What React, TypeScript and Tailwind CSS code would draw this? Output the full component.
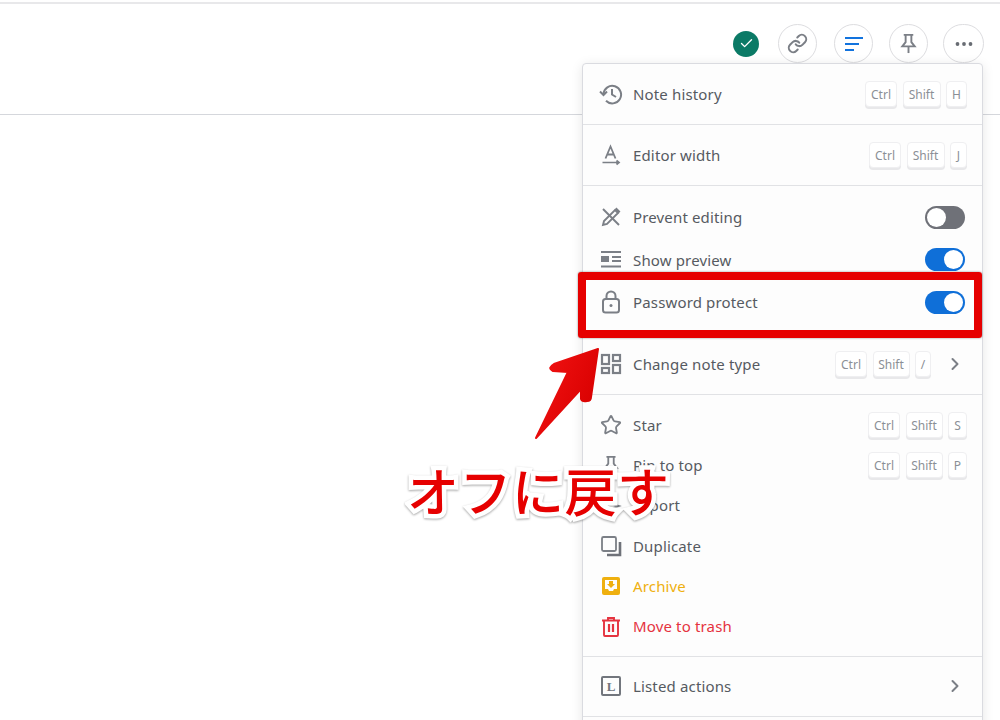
import React from "react";
import { Check, ChevronRight, Link as LinkIcon, Star } from "lucide-react";

const Keys = ({ keys, w }: { keys: string[]; w: string[] }) => (
  <div className="flex items-center gap-[5.5px]">
    {keys.map((k, i) => (
      <span
        key={k}
        style={{ width: w[i] }}
        className="flex h-[26px] items-center justify-center rounded-[4px] border border-[#efeff1] bg-white pt-[1px] text-[12px] text-[#8b8f96] shadow-[0_2px_0_#e8e8ea]"
      >
        {k}
      </span>
    ))}
  </div>
);

const Toggle = ({ on }: { on: boolean }) =>
  on ? (
    <div className="flex h-[23px] w-[40px] items-center justify-end rounded-full bg-[#0f6fd8] pr-[2px]">
      <div className="h-[19px] w-[19px] rounded-full bg-white" />
    </div>
  ) : (
    <div className="flex h-[23px] w-[40px] items-center rounded-full bg-[#6f7178] pl-[2px]">
      <div className="h-[19px] w-[19px] rounded-full bg-white" />
    </div>
  );

const Row = ({
  icon,
  label,
  right,
  h,
  color = "text-[#565a61]",
}: {
  icon: React.ReactNode;
  label: string;
  right?: React.ReactNode;
  h: string;
  color?: string;
}) => (
  <div className={`flex items-center pl-[16px] pr-[15px] ${h}`}>
    <div className="flex w-[24px] items-center justify-center">{icon}</div>
    <span className={`ml-[10px] flex-1 text-[15px] tracking-[0.15px] ${color}`}>{label}</span>
    {right}
  </div>
);

const G = "#7b7f86";

const HistoryIcon = () => (
  <svg width="24" height="24" viewBox="0 0 24 24" fill="none" stroke={G} strokeWidth="2">
    <path d="M4.5 12 A8.8 8.8 0 1 1 7 18.8" />
    <path d="M1 9.5 L4.5 13 L8 9.5" />
    <path d="M13 7 V12.5 L17 15" />
  </svg>
);
const EditorIcon = () => (
  <svg width="22" height="22" viewBox="0 0 22 22" fill="none" stroke={G} strokeWidth="1.8">
    <path d="M5.5 14.5 L10.5 2.5 L15.5 14.5 M7.5 10.5 H13.5" />
    <path d="M2.5 18.5 H18.5 M16.5 16.5 L19 18.5 L16.5 20.5" strokeWidth="1.7" />
  </svg>
);
const PencilOffIcon = () => (
  <svg width="22" height="22" viewBox="0 0 22 22" fill="none" stroke={G} strokeWidth="1.9">
    <path d="M3 3 L19 19" />
    <path d="M3 19 L4 15 L15 4 L18 7 L7 18 Z" />
    <path d="M15.5 2.5 L19.5 6.5" strokeWidth="2.6" />
  </svg>
);
const PreviewIcon = () => (
  <svg width="22" height="22" viewBox="0 0 22 22" fill="none" stroke={G} strokeWidth="1.8">
    <path d="M1 3 H21 M12 8 H21 M12 12 H21 M1 17.5 H21" />
    <rect x="1" y="7" width="8" height="6" fill={G} stroke="none" />
  </svg>
);
const LockIcon = () => (
  <svg width="22" height="24" viewBox="0 0 22 24" fill="none" stroke={G} strokeWidth="2">
    <rect x="3" y="9" width="16" height="13.5" rx="2.5" />
    <path d="M6.5 9 V6 A4.5 4.5 0 0 1 15.5 6 V9" />
    <circle cx="11" cy="15.5" r="1.5" fill={G} stroke="none" />
  </svg>
);
const TypeIcon = () => (
  <svg width="22" height="22" viewBox="0 0 22 22" fill="none" stroke={G} strokeWidth="2.2">
    <rect x="2" y="2" width="7" height="9" />
    <rect x="13" y="2" width="7" height="6" />
    <rect x="13" y="12" width="7" height="8" />
    <rect x="2" y="15" width="7" height="5" />
  </svg>
);
const PushPin = ({ size, c = G }: { size: number; c?: string }) => (
  <svg width={size} height={size} viewBox="0 0 22 22" fill="none" stroke={c} strokeWidth="2">
    <path d="M6 2 H16 M8 2 V9.5 L4.5 14 H17.5 L14 9.5 V2" />
    <path d="M11 14 V21" />
  </svg>
);
const ExportIcon = () => (
  <svg width="22" height="22" viewBox="0 0 22 22" fill="none" stroke={G} strokeWidth="1.8">
    <path d="M11 3 L13 9 L19 11 L13 13 L11 19 L9 13 L3 11 L9 9 Z" />
  </svg>
);
const DuplicateIcon = () => (
  <svg width="22" height="22" viewBox="0 0 22 22" fill="none">
    <path d="M7 20 H20 V7" stroke="#6f7279" strokeWidth="2.6" />
    <rect x="2" y="2" width="14" height="14" rx="1.5" stroke={G} strokeWidth="1.8" fill="#fdfdfd" />
  </svg>
);
const ArchiveIcon = () => (
  <svg width="20" height="20" viewBox="0 0 20 20">
    <rect x="1" y="1" width="18" height="18" rx="2" fill="#efb00f" />
    <path d="M4 4 H16 V13 H13 L12 15 H8 L7 13 H4 Z" fill="#fdfdfd" />
    <path d="M8 5 H12 V8 H14 L10 12 L6 8 H8 Z" fill="#efb00f" />
  </svg>
);
const TrashIcon = () => (
  <svg width="20" height="20" viewBox="0 0 20 20" fill="none" stroke="#e5333f" strokeWidth="1.9">
    <path d="M1 3.5 H19 M7 3 V1 H13 V3" />
    <path d="M3 4 V18 A1 1 0 0 0 4 19 H16 A1 1 0 0 0 17 18 V4" />
    <path d="M8 7 V15 M12 7 V15" strokeWidth="2.2" />
  </svg>
);
const ListedIcon = () => (
  <div className="flex h-[20px] w-[20px] items-center justify-center rounded-[2px] border-2 border-[#72767d] font-['Liberation_Serif',serif] text-[13px] leading-none font-bold text-[#72767d]">
    L
  </div>
);
const LinesIcon = () => (
  <svg width="20" height="20" viewBox="0 0 20 20" stroke="#1273de" strokeWidth="2">
    <path d="M1 4 H19 M1 10 H15 M1 16 H10" />
  </svg>
);
const Dots = () => (
  <svg width="20" height="20" viewBox="0 0 20 20" fill="#686c73">
    <circle cx="3.5" cy="10" r="1.9" />
    <circle cx="10" cy="10" r="1.9" />
    <circle cx="16.5" cy="10" r="1.9" />
  </svg>
);

const Round = ({ children, size = "h-[39px] w-[39px]" }: { children: React.ReactNode; size?: string }) => (
  <div className={`flex items-center justify-center rounded-full border border-[#dddde0] bg-white ${size}`}>{children}</div>
);

export default function App() {
  return (
    <div className="relative h-[720px] w-[1000px] overflow-hidden bg-white font-['Noto_Sans','Open_Sans',sans-serif]">
      <div className="mt-[2px] h-[113px] border-t-2 border-b border-t-[#e8e8ea] border-b-[#d5d7dc]">
        <div className="flex items-center justify-end pt-[20px] pr-[16px]">
          <div className="mr-[19px] flex h-[26px] w-[26px] items-center justify-center rounded-full bg-[#0b7a66]">
            <Check size={15} color="white" strokeWidth={2.2} />
          </div>
          <Round><LinkIcon size={21} color={G} strokeWidth={2.3} /></Round>
          <div className="ml-[17px]"><Round><LinesIcon /></Round></div>
          <div className="ml-[16px]"><Round><PushPin size={21} /></Round></div>
          <div className="ml-[15px]"><Round size="h-[39px] w-[41px]"><Dots /></Round></div>
        </div>
      </div>

      {/* dropdown menu */}
      <div className="absolute top-[63px] left-[582px] w-[401px] rounded-t-[4px] border border-[#dadbe0] bg-[#fdfdfd] shadow-[0_2px_12px_rgba(0,0,0,0.10)]">
        <div className="border-b border-[#e1e2e5]">
          <Row h="h-[60px]" icon={<HistoryIcon />} label="Note history" right={<Keys keys={["Ctrl", "Shift", "H"]} w={["32px", "38px", "21px"]} />} />
        </div>
        <div className="border-b border-[#e1e2e5]">
          <Row h="h-[60px]" icon={<EditorIcon />} label="Editor width" right={<Keys keys={["Ctrl", "Shift", "J"]} w={["32px", "38px", "17px"]} />} />
        </div>
        <div className="border-b border-[#e1e2e5] py-[10px]">
          <Row h="h-[42.5px]" icon={<PencilOffIcon />} label="Prevent editing" right={<div className="mr-[2px]"><Toggle on={false} /></div>} />
          <Row h="h-[42.5px]" icon={<PreviewIcon />} label="Show preview" right={<div className="mr-[2px]"><Toggle on /></div>} />
          <Row h="h-[42px]" icon={<LockIcon />} label="Password protect" right={<div className="mr-[2px]"><Toggle on /></div>} />
        </div>
        <div className="border-b border-[#e1e2e5]">
          <Row
            h="h-[60px]"
            icon={<TypeIcon />}
            label="Change note type"
            right={
              <div className="flex items-center">
                <Keys keys={["Ctrl", "Shift", "/"]} w={["32px", "37px", "16px"]} />
                <ChevronRight size={20} color={G} strokeWidth={2.4} className="mr-[2px] ml-[14px]" />
              </div>
            }
          />
        </div>
        <div className="border-b border-[#e1e2e5] pt-[10px] pb-[9px]">
          <Row h="h-[40.3px]" icon={<Star size={22} color={G} strokeWidth={2} />} label="Star" right={<Keys keys={["Ctrl", "Shift", "S"]} w={["32px", "37px", "19px"]} />} />
          <Row h="h-[40.3px]" icon={<PushPin size={20} />} label="Pin to top" right={<Keys keys={["Ctrl", "Shift", "P"]} w={["32px", "37px", "19px"]} />} />
          <Row h="h-[40.3px]" icon={<ExportIcon />} label="Export" />
          <Row h="h-[40.3px]" icon={<DuplicateIcon />} label="Duplicate" />
          <Row h="h-[40.3px]" icon={<ArchiveIcon />} label="Archive" color="text-[#efb00f]" />
          <Row h="h-[40.3px]" icon={<TrashIcon />} label="Move to trash" color="text-[#e5333f]" />
        </div>
        <div className="border-b border-[#e1e2e5]">
          <Row h="h-[59px]" icon={<ListedIcon />} label="Listed actions" right={<ChevronRight size={20} color={G} strokeWidth={2.4} className="mr-[2px]" />} />
        </div>
        <div className="h-[20px]" />
      </div>

      {/* annotations */}
      <div className="absolute top-[272px] left-[578px] h-[66px] w-[404px] rounded-[3px] border-[8px] border-[#e60000] shadow-[0_0_2px_rgba(0,0,0,0.5)]" />
      <svg className="absolute top-[340px] left-[525px]" width="90" height="110" viewBox="0 0 90 110">
        <defs>
          <linearGradient id="arrowFill" x1="0" y1="0" x2="1" y2="0.6">
            <stop offset="0" stopColor="#f41414" />
            <stop offset="1" stopColor="#d80000" />
          </linearGradient>
        </defs>
        <path
          d="M73 9 L29 24 Q22 28 28 31 L43 32 L11 98 L56 49 L56 59 Q57 62 62 61 Q66 61 66 57 Z"
          fill="url(#arrowFill)"
          stroke="url(#arrowFill)"
          strokeWidth="2"
          strokeLinejoin="round"
        />
      </svg>
      <div className="absolute top-[452px] left-[407px] font-['Noto_Sans_CJK_JP',sans-serif] text-[52px] leading-[76px] font-medium tracking-[0.5px] whitespace-nowrap text-[#e60000] [paint-order:stroke_fill] [-webkit-text-stroke:9px_white] [filter:drop-shadow(0_1px_1px_rgba(0,0,0,0.35))]">
        オフに戻す
      </div>
    </div>
  );
}
